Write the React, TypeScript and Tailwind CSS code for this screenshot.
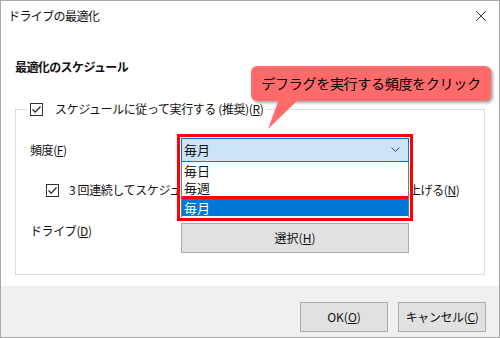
import React from 'react';

const font = { fontFamily: '"Noto Sans CJK JP", "Noto Sans", sans-serif' };

function CheckBox() {
    return (
        <span className="w-[13px] h-[13px] border border-[#333] bg-white flex items-center justify-center shrink-0">
            <svg width="11" height="11" viewBox="0 0 11 11" fill="none">
                <path d="M1.5 5.5L4.2 8.2L9.5 2.5" stroke="#222" strokeWidth="1.2" />
            </svg>
        </span>
    );
}

function Btn({ children, className = '' }: { children: React.ReactNode; className?: string }) {
    return (
        <div className={`h-[30px] bg-[#e1e1e1] border border-[#adadad] flex items-center justify-center text-[12px] text-[#111] ${className}`}>
            {children}
        </div>
    );
}

export default function App() {
    return (
        <div style={font} className="relative w-[500px] h-[338px] bg-white border border-[#a9a9a9] flex flex-col text-[#111] overflow-hidden">
            {/* Title bar */}
            <div className="h-[30px] flex items-center justify-between pl-[7px] pr-[12px]">
                <span className="text-[12px] tracking-[-0.6px]">ドライブの最適化</span>
                <svg width="12" height="12" viewBox="0 0 12 12">
                    <path d="M1 1L11 11M11 1L1 11" stroke="#333" strokeWidth="1" />
                </svg>
            </div>

            {/* Body */}
            <div className="flex-1 px-[14px] pt-[28px]">
                <div className="text-[12px] font-bold tracking-[-0.6px] leading-[16px]">最適化のスケジュール</div>

                <fieldset className="mt-[26px] border border-[#dcdcdc] h-[174px] px-[14px] min-w-0">
                    <legend className="ml-[-3px] px-[3px] flex items-center gap-[12px] text-[12px] leading-[16px]">
                        <CheckBox />
                        <span className="tracking-[-0.4px]">スケジュールに従って実行する (推奨)(<u>R</u>)</span>
                    </legend>

                    {/* Frequency */}
                    <div className="mt-[21px] flex items-center h-[24px]">
                        <span className="w-[151px] text-[12px] tracking-[-0.4px]">頻度(<u>F</u>)</span>
                        <div className="relative w-[228px] h-[24px] z-10">
                            <div className="w-full h-full bg-[#cce4f7] border border-[#0078d7] flex items-center justify-between pl-[2px] pr-[8px] text-[13px]">
                                <span>毎月</span>
                                <svg width="9" height="6" viewBox="0 0 9 6">
                                    <path d="M0.5 0.5L4.5 4.5L8.5 0.5" stroke="#444" strokeWidth="1" fill="none" />
                                </svg>
                            </div>
                            {/* Open list */}
                            <div className="absolute left-0 top-full w-full bg-white border-x border-[#7a7a7a] text-[13px] leading-[17px]">
                                <div className="px-[2px] h-[17px]">毎日</div>
                                <div className="px-[2px] h-[17px]">毎週</div>
                                <div className="border-t-[3px] border-[#ff0000] h-[21px]">
                                    <div className="px-[2px] h-[17px] bg-[#0078d7] text-white">毎月</div>
                                </div>
                            </div>
                            {/* Annotation frame */}
                            <div className="absolute left-[-4px] top-[-4px] w-[236px] h-[87px] border-[3px] border-[#ff0000] pointer-events-none" />
                        </div>
                    </div>

                    {/* Raise priority */}
                    <div className="mt-[21px] flex items-center h-[14px] pl-[16px] text-[12px]">
                        <CheckBox />
                        <span className="ml-[10px] w-[330px] overflow-hidden whitespace-nowrap tracking-[-0.4px]">
                            3 回連続してスケジュールされた実行が実行されなかった場合、優先度を
                        </span>
                        <span className="ml-[10px] tracking-[-0.4px]">上げる(<u>N</u>)</span>
                    </div>

                    {/* Drive */}
                    <div className="mt-[26px] flex items-start">
                        <span className="w-[151px] text-[12px] leading-[16px] tracking-[-0.4px]">ドライブ(<u>D</u>)</span>
                        <Btn className="w-[228px] h-[28px]">選択(<u>H</u>)</Btn>
                    </div>
                </fieldset>
            </div>

            {/* Footer */}
            <div className="h-[51px] bg-[#f0f0f0] flex items-start justify-end gap-[10px] pt-[16px] pr-[13px]">
                <Btn className="w-[88px]">OK(<u>O</u>)</Btn>
                <Btn className="w-[88px] tracking-[-0.4px]">キャンセル(<u>C</u>)</Btn>
            </div>

            {/* Callout */}
            <div className="absolute left-[250px] top-[65px] w-[240px] h-[35px] rounded-[6px] bg-[#ff6a6a] shadow-[2px_2px_3px_rgba(0,0,0,0.35)] flex items-center justify-center text-[14px] text-black tracking-[-0.3px]">
                デフラグを実行する頻度をクリック
            </div>
            <svg className="absolute left-[264px] top-[98px]" width="40" height="34" viewBox="0 0 40 34">
                <polygon points="14,0 34,0 3,30" fill="#ff6a6a" />
            </svg>
        </div>
    );
}
